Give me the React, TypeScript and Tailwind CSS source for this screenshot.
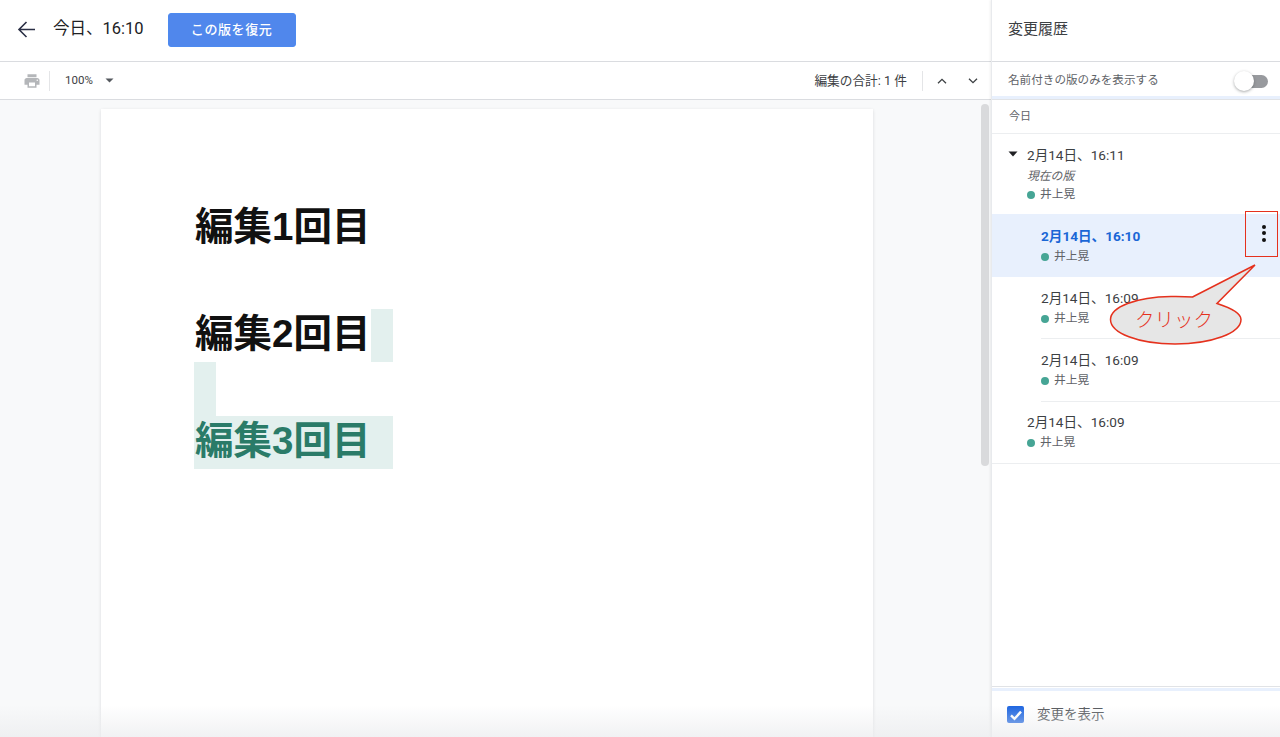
const cjk = "font-['Roboto','Noto_Sans_CJK_JP',sans-serif]";

function Author() {
  return (
    <div className="flex items-center h-[20px] text-[11.8px] text-[#5f6368]">
      <span className="w-[8px] h-[8px] rounded-full bg-[#46a595] mr-[5px]" />
      <span>井上晃</span>
    </div>
  );
}

function Row({ time, className, active }: { time: string; className: string; active?: boolean }) {
  return (
    <div className={`flex flex-col ${className}`}>
      <div className={`h-[20px] leading-[20px] text-[13.6px] ${active ? "font-bold text-[#1a66d6]" : "text-[#3c4043]"}`}>{time}</div>
      <div className="mt-[1px]"><Author /></div>
    </div>
  );
}

export default function App() {
  return (
    <div className={`relative w-[1280px] h-[737px] overflow-hidden bg-white text-[#202124] ${cjk}`}>
      <div className="flex h-full">
        {/* Left */}
        <div className="w-[991px] flex flex-col shrink-0">
          <div className="h-[62px] shrink-0 flex items-center border-b border-[#dadce0] pb-[2px]">
            <svg className="ml-[17px]" width="19" height="19" viewBox="0 0 19 19" fill="none" stroke="#2a2f45" strokeWidth="1.6">
              <path d="M18 9.5H2M9.5 2 2 9.5 9.5 17" />
            </svg>
            <span className="ml-[17px] text-[16.5px] text-[#202124]">今日、16:10</span>
            <button className="ml-[24px] mt-[1px] w-[128px] h-[34px] rounded-[3px] bg-[#5087ec] border border-[#4d8af0] text-white text-[13px] font-medium tracking-[0.6px]">
              この版を復元
            </button>
          </div>
          <div className="h-[38px] shrink-0 flex items-center border-b border-[#dadce0]">
            <svg className="ml-[23px]" width="18" height="18" viewBox="0 0 24 24" fill="#b4b6b9">
              <path d="M19 8H5c-1.66 0-3 1.34-3 3v6h4v4h12v-4h4v-6c0-1.66-1.34-3-3-3zm-3 11H8v-5h8v5zm3-7c-.55 0-1-.45-1-1s.45-1 1-1 1 .45 1 1-.45 1-1 1zm-1-9H6v4h12V3z" />
            </svg>
            <div className="ml-[8px] w-px h-[20px] bg-[#e4e5e7]" />
            <span className="ml-[15px] text-[11.5px] text-[#3c4043]">100%</span>
            <svg className="ml-[12px]" width="9" height="5" viewBox="0 0 9 5" fill="#55595e"><path d="M0.5 0.5h8L4.5 4.5z" /></svg>
            <div className="flex-1" />
            <span className="text-[12.7px] text-[#3c4043]">編集の合計: 1 件</span>
            <div className="ml-[15px] w-px h-[20px] bg-[#e4e5e7]" />
            <svg className="ml-[14px]" width="10" height="6" viewBox="0 0 10 6" fill="none" stroke="#3c4043" strokeWidth="1.3"><path d="M1 5.3 5 1.3 9 5.3" /></svg>
            <svg className="ml-[21px] mr-[13px]" width="10" height="6" viewBox="0 0 10 6" fill="none" stroke="#3c4043" strokeWidth="1.3"><path d="M1 .7 5 4.7 9 .7" /></svg>
          </div>
          <div className="flex-1 relative bg-[#f8f9fa] pl-[101px] pt-[9px] overflow-hidden">
            <div className="w-[772px] h-[700px] bg-white shadow-[0_1px_3px_rgba(60,64,67,0.16)] pl-[93px] pt-[91px] font-['Liberation_Sans','Noto_Sans_CJK_JP',sans-serif] font-bold text-[38.5px] leading-[53.5px] text-[#111]">
              <div className="h-[53.5px] pl-[1px] whitespace-nowrap">編集1回目</div>
              <div className="h-[55px]" />
              <div className="flex h-[53.5px] whitespace-nowrap leading-[49px]">
                <span className="w-[177px] pl-[1px]">編集2回目</span>
                <span className="w-[22px] bg-[#e3f0ee]" />
              </div>
              <div className="w-[22px] h-[53.5px] bg-[#e3f0ee]" />
              <div className="w-[199px] h-[53.5px] pl-[1px] bg-[#e3f0ee] text-[#2a7b68] whitespace-nowrap leading-[49px]">編集3回目</div>
            </div>
            <div className="absolute right-[2px] top-[4px] w-[8px] h-[362px] rounded-full bg-[#d9dadc]" />
          </div>
        </div>

        {/* Right */}
        <div className="w-[289px] flex flex-col border-l border-[#e8eaed] shadow-[-1px_0_2px_rgba(60,64,67,0.08)] z-[1] bg-white">
          <div className="h-[62px] shrink-0 flex items-center border-b border-[#dadce0] pl-[16px] pb-[3px] text-[15px] text-[#3c4043]">変更履歴</div>
          <div className="h-[34px] shrink-0 flex items-center pl-[16px] pt-[4px] text-[11.6px] text-[#5f6368]">
            <span>名前付きの版のみを表示する</span>
            <div className="relative ml-auto mr-[12px] w-[34px] h-[13px] flex items-center justify-end">
              <div className="w-[25px] h-[13px] rounded-full bg-[#989a9e]" />
              <div className="absolute left-0 top-[-3.5px] w-[20px] h-[20px] rounded-full bg-white shadow-[0_1px_3px_rgba(60,64,67,0.45)]" />
            </div>
          </div>
          <div className="h-[4px] shrink-0 bg-[#e8f0fd] border-b border-[#e1e3e6]" />
          <div className="h-[34px] shrink-0 flex items-center pl-[17px] pt-[1px] text-[11px] text-[#5f6368] border-b border-[#eceef0]">今日</div>
          <div className="flex-1">
            <div className="h-[80px] relative pl-[35px] pt-[11px]">
              <svg className="absolute left-[16px] top-[17px]" width="10" height="6" viewBox="0 0 10 6" fill="#202124"><path d="M0.5 0.5h9L5 5.5z" /></svg>
              <div className="h-[20px] leading-[20px] text-[13.6px] text-[#3c4043]">2月14日、16:11</div>
              <div className="mt-[2px] h-[18px] leading-[18px] text-[11.8px] italic text-[#5f6368]">現在の版</div>
              <Author />
            </div>
            <Row time="2月14日、16:10" className="h-[63px] pt-[12px] pl-[49px] bg-[#e8f0fd]" active />
            <div className="pl-[49px]">
              <Row time="2月14日、16:09" className="h-[62px] pt-[11px] border-b border-[#eceef0]" />
              <Row time="2月14日、16:09" className="h-[63px] pt-[11px] border-b border-[#eceef0]" />
            </div>
            <Row time="2月14日、16:09" className="h-[62px] pt-[10px] pl-[35px] border-b border-[#eceef0]" />
          </div>
          <div className="h-[51px] shrink-0 border-t border-[#e1e3e6]">
            <div className="mt-[1px] h-[3px] bg-[#e8f0fd]" />
            <div className="h-[47px] flex items-center pl-[15px] text-[13.5px] text-[#4f5357]">
              <div className="w-[17px] h-[17px] rounded-[2px] bg-[#1a63e0] flex items-center justify-center">
                <svg width="14" height="14" viewBox="0 0 14 14" fill="none" stroke="#fff" strokeWidth="2.4"><path d="M2 7.3 5.5 10.8 12 3.6" /></svg>
              </div>
              <span className="ml-[13px]">変更を表示</span>
            </div>
          </div>
        </div>
      </div>

      {/* bottom fade */}
      <div className="absolute left-0 right-0 bottom-0 h-[32px] z-[2] pointer-events-none bg-gradient-to-b from-[rgba(235,236,238,0)] to-[rgba(235,236,238,0.7)]" />

      {/* three-dot menu and annotation */}
      <div className="absolute left-[1245px] top-[211px] w-[33px] h-[46px] border-[1.5px] border-[#e5311d] z-[3] flex flex-col items-center justify-center gap-[2.5px] pl-[4px] pb-[2px]">
        <span className="w-[4px] h-[4px] rounded-full bg-[#111]" />
        <span className="w-[4px] h-[4px] rounded-full bg-[#111]" />
        <span className="w-[4px] h-[4px] rounded-full bg-[#111]" />
      </div>
      <div className="absolute left-[1104px] top-[260px] w-[160px] h-[90px] z-[3]">
        <svg width="160" height="90" viewBox="0 0 160 90" className="absolute inset-0">
          <path d="M88.5 37 151 5 113 43.5C127 48 137 53 137 59.5 137 73 108 84 71 84 34 84 6.5 73 6.5 59.5 6.5 47 32 37 67 36.5 75 36.4 82 36.5 88.5 37Z" fill="#e6e6e6" stroke="#e5311d" strokeWidth="1.5" />
        </svg>
        <span className="absolute left-[31px] top-[45px] text-[19.5px] leading-[28px] text-[#e5311d] font-['Noto_Sans_CJK_JP',sans-serif] font-light whitespace-nowrap">クリック</span>
      </div>
    </div>
  );
}
